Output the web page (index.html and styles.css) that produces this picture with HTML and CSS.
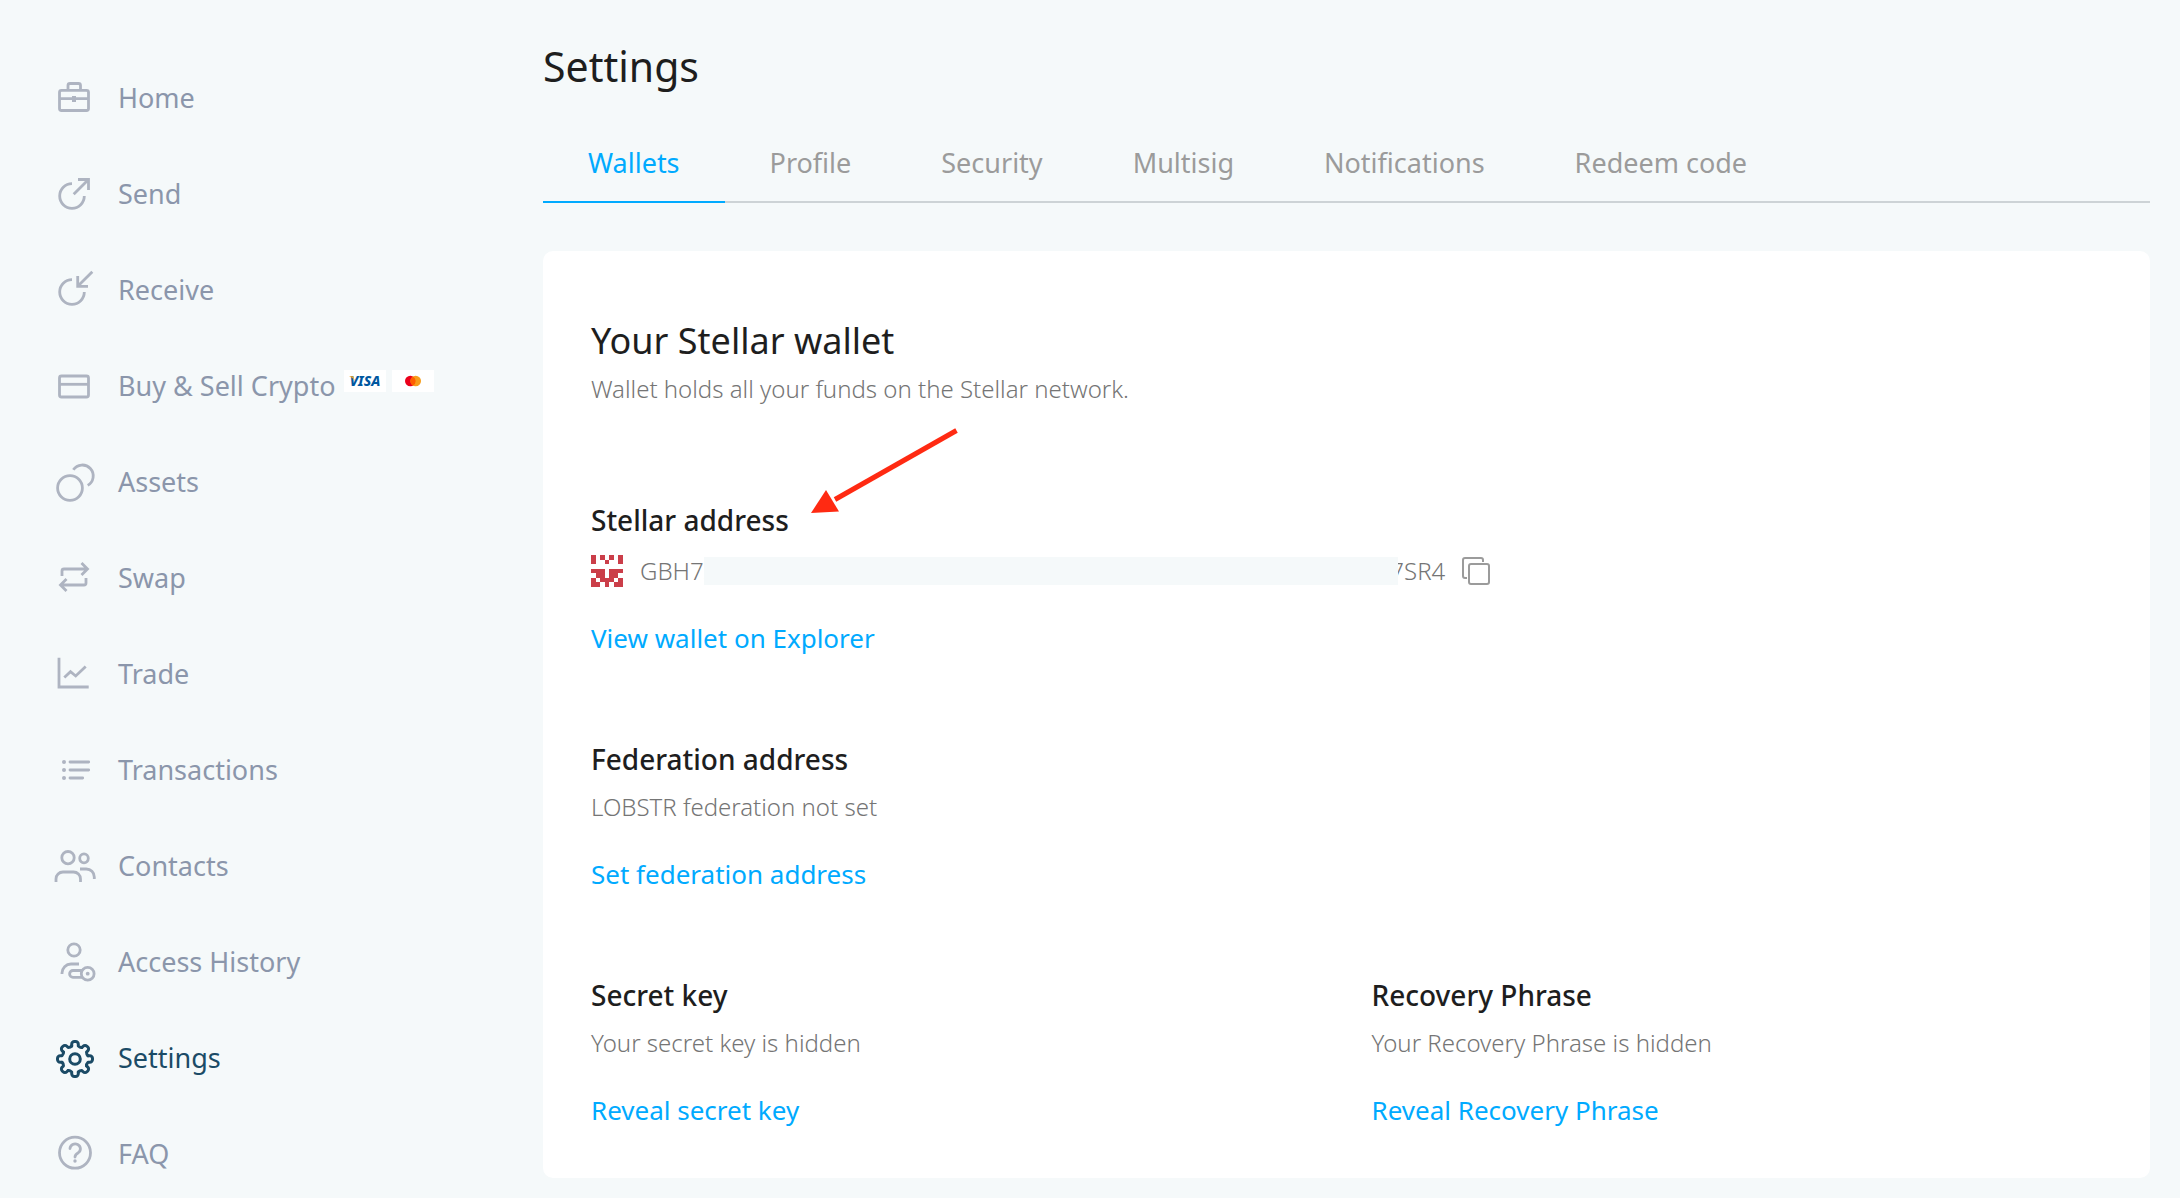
FILE: index.html
```
<!DOCTYPE html>
<html lang="en">
  <head>
    <meta charset="utf-8" />
    <title>Settings</title>
    <link rel="stylesheet" href="styles.css">
  </head>
  <body>
    <div class="layout">
      <!-- Sidebar -->
      <nav class="sidebar">
        <a class="nav-item" href="#home">
          <svg class="icon" viewBox="0 0 48 48">
            <rect x="9.5" y="16.3" width="29" height="20.2" rx="2" />
            <path d="M18 16V11.5a2 2 0 0 1 2-2h8.500a2 2 0 0 1 2 2V16M9.500 24.700h29" />
            <path class="fill" d="M22 22h4v6h-4z" />
          </svg>
          Home
        </a>
        <a class="nav-item" href="#send">
          <svg class="icon" viewBox="0 0 48 48">
            <path d="M22 13.700A12.300 12.300 0 1 0 34.300 26M23.700 24.300L38 10M28 9.500h10.500V20" />
          </svg>
          Send
        </a>
        <a class="nav-item" href="#receive">
          <svg class="icon" viewBox="0 0 48 48">
            <path d="M22 13.700A12.300 12.300 0 1 0 34.300 26M42.300 5.700L28 20M27.700 10v10.300H38" />
          </svg>
          Receive
        </a>
        <a class="nav-item" href="#buy">
          <svg class="icon" viewBox="0 0 48 48">
            <rect x="9.5" y="14" width="29" height="21" rx="2" />
            <path d="M9.500 22.300h29" />
          </svg>
          <span>Buy &amp; Sell Crypto</span>
          <span class="cards">
            <svg class="card-logo" viewBox="0 0 42 22">
              <text class="visa" x="21" y="16" text-anchor="middle">VISA</text>
              <path fill="#f7a823" d="M5 6.300h4.200l1.500 4.500Q9 7.500 5 6.300z" />
            </svg>
            <svg class="card-logo" viewBox="0 0 42 22">
              <circle cx="18.3" cy="11" r="5.300" fill="#eb001b" />
              <circle cx="23.7" cy="11" r="5.300" fill="#f79e1b" />
              <path fill="#ff5f00" d="M21 6.400a5.300 5.300 0 0 1 0 9.200a5.300 5.300 0 0 1 0-9.200z" />
            </svg>
          </span>
        </a>
        <a class="nav-item" href="#assets">
          <svg class="icon" viewBox="0 0 48 48">
            <circle cx="20" cy="30" r="12.400" />
            <path d="M23.300 11.800A10.900 10.900 0 1 1 37.700 27.400" />
          </svg>
          Assets
        </a>
        <a class="nav-item" href="#swap">
          <svg class="icon" viewBox="0 0 48 48">
            <path d="M12 22v-5a2 2 0 0 1 2-2h23.500M31.500 9l6 6-6 6M36 24v5a2 2 0 0 1-2 2H10.500M16.500 25l-6 6 6 6" />
          </svg>
          Swap
        </a>
        <a class="nav-item" href="#trade">
          <svg class="icon" viewBox="0 0 48 48">
            <path d="M9 7.700V37h29.700M14.300 27.500l6.200-5.800 5.200 4.300 10-9.500" />
          </svg>
          Trade
        </a>
        <a class="nav-item" href="#transactions">
          <svg class="icon round" viewBox="0 0 48 48">
            <path d="M20 16h18.700M20 24h18.700M20 32h12.700" />
            <g class="fill">
              <circle cx="14" cy="16" r="2" />
              <circle cx="14" cy="24" r="2" />
              <circle cx="14" cy="32" r="2" />
            </g>
          </svg>
          Transactions
        </a>
        <a class="nav-item" href="#contacts">
          <svg class="icon" viewBox="0 0 48 48">
            <circle cx="18" cy="15.700" r="6.200" />
            <ellipse cx="34" cy="16.300" rx="4.300" ry="4.500" />
            <path d="M6 40v-3a7 7 0 0 1 7-7h10.500a7 7 0 0 1 7 7v3M30 27h6.300a8 8 0 0 1 8 8v2" />
          </svg>
          Contacts
        </a>
        <a class="nav-item" href="#access">
          <svg class="icon" viewBox="0 0 48 48">
            <circle cx="24" cy="12" r="6.200" />
            <path d="M12 36v-1a9 9 0 0 1 9-9h8M32.500 32.500H23a3.300 3.300 0 0 0 0 6.800h9.500" />
            <circle cx="37.7" cy="35.700" r="6.400" />
            <circle class="fill" cx="37.700" cy="35.700" r="1.900" />
          </svg>
          Access History
        </a>
        <a class="nav-item active" href="#settings">
          <svg class="icon round" viewBox="0 0 48 48">
            <defs>
              <path id="tooth" d="M-3.300-13v-1.800a2.700 2.700 0 0 1 2.700-2.700h1.200a2.700 2.700 0 0 1 2.700 2.700V-13Q5-11.300 6.860-11.520" />
            </defs>
            <g transform="translate(25 25)">
              <use href="#tooth" />
              <use href="#tooth" transform="rotate(45)" />
              <use href="#tooth" transform="rotate(90)" />
              <use href="#tooth" transform="rotate(135)" />
              <use href="#tooth" transform="rotate(180)" />
              <use href="#tooth" transform="rotate(225)" />
              <use href="#tooth" transform="rotate(270)" />
              <use href="#tooth" transform="rotate(315)" />
              <circle r="5.300" />
            </g>
          </svg>
          Settings
        </a>
        <a class="nav-item" href="#faq">
          <svg class="icon round" viewBox="0 0 48 48">
            <circle cx="25" cy="22.700" r="15.500" />
            <path d="M20 18.500a5.200 4.900 0 1 1 8.300 4.200Q25 24.500 25 27" />
            <circle class="fill" cx="25" cy="31" r="1.700" />
          </svg>
          FAQ
        </a>
      </nav>

      <!-- Content -->
      <main class="main">
        <h1>Settings</h1>

        <div class="tabs">
          <a class="tab active" href="#wallets">Wallets</a>
          <a class="tab" href="#profile">Profile</a>
          <a class="tab" href="#security">Security</a>
          <a class="tab" href="#multisig">Multisig</a>
          <a class="tab" href="#notifications">Notifications</a>
          <a class="tab" href="#redeem">Redeem code</a>
        </div>

        <div class="card">
          <h2>Your Stellar wallet</h2>
          <p class="subtitle">Wallet holds all your funds on the Stellar network.</p>

          <section class="section first">
            <h3>Stellar address</h3>
            <svg class="arrow" viewBox="0 0 150 88">
              <path d="M145.500 3.500L24 72.500" stroke="#ff2a12" stroke-width="5" />
              <path d="M0 86L15 63l13 21.500z" fill="#ff2a12" />
            </svg>
            <div class="address">
              <svg class="identicon" viewBox="0 0 7 7" shape-rendering="crispEdges">
                <path d="M0 0h1v2H0zM2 0h1v1H2zM4 0h1v1H4zM6 0h1v2H6zM3 1h1v1H3zM0 3h3v1H0zM4 3h3v1H4zM1 4h2v1H1zM4 4h2v1H4zM0 5h1v1H0zM2 5h3v1H2zM6 5h1v1H6zM0 6h2v1H0zM3 6h1v1H3zM5 6h2v1H5z" />
              </svg>
              <span>GBH73</span>
              <span class="hidden-part"></span>
              <span>7SR4</span>
              <button class="copy" aria-label="Copy address">
                <svg viewBox="0 0 28 28">
                  <path d="M5 21H3a2 2 0 0 1-2-2V3a2 2 0 0 1 2-2h16a2 2 0 0 1 2 2v2" />
                  <rect x="7" y="7" width="20" height="20" rx="2" />
                </svg>
              </button>
            </div>
            <a class="link" href="#explorer">View wallet on Explorer</a>
          </section>

          <section class="section">
            <h3>Federation address</h3>
            <p>LOBSTR federation not set</p>
            <a class="link" href="#federation">Set federation address</a>
          </section>

          <div class="columns">
            <section class="section">
              <h3>Secret key</h3>
              <p>Your secret key is hidden</p>
              <button class="link">Reveal secret key</button>
            </section>
            <section class="section">
              <h3>Recovery Phrase</h3>
              <p>Your Recovery Phrase is hidden</p>
              <button class="link">Reveal Recovery Phrase</button>
            </section>
          </div>
        </div>
      </main>
    </div>
  </body>
</html>
```
FILE: styles.css
```
* {
  box-sizing: border-box;
}
body {
  margin: 0;
  font-family: "Noto Sans", "Open Sans", sans-serif;
  font-size: 24px;
  line-height: 32px;
  color: #1e1e1e;
  background: #f5f9fa;
}
h1,
h2,
h3,
p {
  margin: 0;
}
a {
  text-decoration: none;
}
.layout {
  display: flex;
}

/* sidebar */
.sidebar {
  flex: 0 0 543px;
  display: flex;
  flex-direction: column;
  gap: 48px;
  padding: 74px 0 20px 50px;
}
.nav-item {
  display: flex;
  align-items: center;
  height: 48px;
  font-size: 27px;
  color: #8b96ab;
}
.nav-item.active {
  color: #1b4b66;
}
.icon {
  width: 48px;
  height: 48px;
  margin-right: 20px;
  fill: none;
  stroke: #aeb4c1;
  stroke-width: 2.8;
}
.icon .fill {
  fill: #aeb4c1;
  stroke: none;
}
.icon.round {
  stroke-linecap: round;
  stroke-linejoin: round;
}
.active .icon {
  stroke: #1b4b66;
  stroke-width: 3;
}
.cards {
  display: flex;
  gap: 6px;
  margin: 0 0 10px 8px;
}
.card-logo {
  width: 42px;
  height: 22px;
  background: white;
}
.visa {
  font-size: 14px;
  font-weight: 800;
  font-style: italic;
  fill: #00579f;
}

/* main area */
.main {
  flex: 1;
  min-width: 0;
  padding: 42px 30px 20px 0;
}
h1 {
  font-size: 41px;
  font-weight: 400;
  line-height: 48px;
}
.tabs {
  display: flex;
  margin-top: 55px;
  border-bottom: 2px solid #cdd3d6;
}
.tab {
  padding: 0 45px 20px;
  margin-bottom: -2px;
  border-bottom: 2px solid transparent;
  font-size: 27px;
  line-height: 36px;
  color: #9b9b9b;
}
.tab.active {
  color: #00aaff;
  border-bottom-color: #00aaff;
}
.card {
  margin-top: 48px;
  padding: 68px 48px 50px;
  background: white;
  border-radius: 10px;
}
h2 {
  font-size: 36px;
  font-weight: 400;
  line-height: 44px;
}
.subtitle {
  margin-top: 10px;
}
.card p,
.address {
  font-weight: 300;
  color: #757575;
}
.section {
  position: relative;
  margin-top: 85px;
}
.section.first {
  margin-top: 97px;
}
h3 {
  font-size: 28px;
  font-weight: 500;
  line-height: 36px;
}
.section p {
  margin-top: 14px;
}
.address {
  display: flex;
  align-items: center;
  margin-top: 17px;
}
.identicon {
  width: 32px;
  height: 32px;
  margin-right: 17px;
  fill: #cb3e49;
}
.hidden-part {
  flex: 0 1 694px;
  height: 28px;
  margin: 0 -8px 0 -13px;
  z-index: 1;
  background: #f5f9fa;
}
.copy {
  display: flex;
  margin-left: 17px;
  padding: 0;
  border: none;
  background: none;
  cursor: pointer;
}
.copy svg {
  width: 28px;
  height: 28px;
  fill: none;
  stroke: #9b9b9b;
  stroke-width: 2;
}
.link {
  display: block;
  width: max-content;
  margin-top: 33px;
  padding: 0;
  border: none;
  background: none;
  font-family: inherit;
  font-size: 26px;
  line-height: 36px;
  color: #00aaff;
  cursor: pointer;
}
.columns {
  display: grid;
  grid-template-columns: 1fr 1fr;
  gap: 50px;
}

/* arrow pointing at the address heading */
.arrow {
  position: absolute;
  left: 220px;
  top: -75px;
  width: 150px;
  height: 88px;
  fill: none;
}
```
